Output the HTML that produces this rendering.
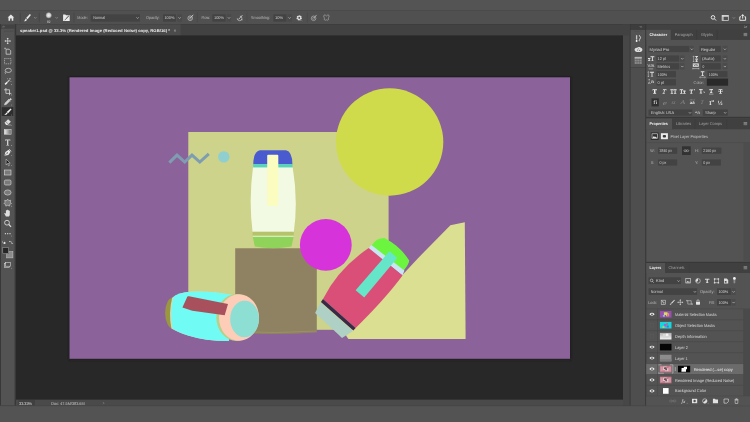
<!DOCTYPE html>
<html>
<head>
<meta charset="utf-8">
<title>Photoshop</title>
<style>
html,body{margin:0;padding:0;}
body{width:750px;height:422px;overflow:hidden;background:#535353;font-family:"Liberation Sans",sans-serif;}
svg{position:absolute;left:0;top:0;display:block;will-change:transform;}
text{text-rendering:geometricPrecision;}

</style>
</head>
<body>
<svg width="750" height="422" viewBox="0 0 750 422">
<rect x="0.00" y="0.00" width="750.00" height="422.00" fill="#535353" />
<rect x="0.00" y="0.00" width="750.00" height="10.70" fill="#545454" />
<rect x="0.00" y="10.40" width="750.00" height="0.70" fill="#454545" />
<rect x="0.00" y="11.00" width="750.00" height="13.00" fill="#505050" />
<rect x="0.00" y="24.00" width="750.00" height="382.00" fill="#383838" />
<rect x="1.00" y="24.00" width="13.60" height="381.60" fill="#535353" />
<rect x="1.00" y="24.40" width="13.60" height="4.30" fill="#424242" />
<rect x="16.00" y="24.40" width="607.00" height="11.10" fill="#424242" />
<rect x="16.30" y="24.40" width="164.30" height="11.10" fill="#4b4b4b" />
<rect x="16.00" y="35.50" width="607.00" height="364.20" fill="#282828" />
<rect x="16.00" y="399.70" width="607.00" height="6.00" fill="#4a4a4a" />
<rect x="0.00" y="405.80" width="750.00" height="16.20" fill="#535353" />
<rect x="0.00" y="405.60" width="750.00" height="0.60" fill="#464646" />
<rect x="623.00" y="24.40" width="6.70" height="381.20" fill="#474747" />
<rect x="623.00" y="24.40" width="6.70" height="11.10" fill="#424242" />
<rect x="630.60" y="24.40" width="14.50" height="5.20" fill="#3d3d3d" />
<rect x="630.60" y="29.80" width="14.60" height="37.20" fill="#535353" />
<path d="M634,31.3 h7.4" stroke="#444" stroke-width="0.45" stroke-dasharray="0.6 0.5"/>
<rect x="630.60" y="67.40" width="14.60" height="338.20" fill="#4e4e4e" />
<rect x="646.30" y="24.40" width="103.70" height="5.30" fill="#424242" />
<defs>
    <filter id="sh" x="-5%" y="-5%" width="110%" height="110%"><feGaussianBlur stdDeviation="0.8"/></filter>
    <clipPath id="cv"><rect x="69.5" y="77.3" width="500.5" height="281.5"/></clipPath>
  </defs>
  <rect x="69" y="77.5" width="502" height="282.3" fill="#1c1c1c" filter="url(#sh)"/>
  <rect x="69.5" y="77.3" width="500.5" height="281.5" fill="#8b629a"/>
  <g clip-path="url(#cv)">
    <!-- olive backdrop -->
    <rect x="188.3" y="132" width="200.3" height="197.8" fill="#cdd38b"/>
    <!-- big yellow circle -->
    <circle cx="389.6" cy="142" r="53.7" fill="#d0db4c"/>
    <!-- zigzag -->
    <polyline points="169.3,162.6 177,155.1 184.7,162 192,155.1 199.8,162 208.8,153.8" fill="none" stroke="#7f9db0" stroke-width="3" stroke-linejoin="miter"/>
    <circle cx="223.8" cy="156.9" r="5.7" fill="#8fcfd0"/>
    <!-- pale triangle -->
    <path d="M346,335.6 L418,258.2 L450.4,225.2 L464.8,222.2 L465.6,339.1 L348.4,339.1 Z" fill="#dbdf92"/>
    <!-- brown box -->
    <path d="M235.2,248.2 H316.8 V332.4 Q276,335.4 235.2,332.8 Z" fill="#8f8262"/><path d="M235.2,331.4 Q276,334 316.8,331" fill="none" stroke="#a29a62" stroke-width="0.6"/>
    <!-- white bottle -->
    <path d="M253.3,164.3 Q253.3,151.5 260,150.2 H286 Q292.3,151.5 292.4,164.3 Z" fill="#4a5bd0"/>
    <rect x="253.2" y="164.2" width="39.3" height="3.5" fill="#52d6c0"/>
    <path d="M253,167.5 H292.7 Q298.3,200 293.8,232 H252.6 Q248.5,200 253,167.5 Z" fill="#f3fae3"/>
    <rect x="252.6" y="231.7" width="41.2" height="4.1" fill="#b5c46a"/>
    <path d="M252.7,236.6 H293.7 L291.5,246.5 Q273,250 254.8,246.5 Z" fill="#8fd35b"/>
    <rect x="252.7" y="235.8" width="41" height="0.9" fill="#e9f5d5"/>
    <rect x="267.2" y="154.8" width="11.1" height="51.2" rx="1" fill="#fafcc0"/>
    <!-- magenta circle -->
    <circle cx="325.8" cy="244.9" r="25.9" fill="#d633da"/>
    <!-- pink bottle -->
    <g>
      <path d="M370.6,246.5 L372.6,244.2 Q377,238 384.3,238.1 Q400,246 409.2,260.5 Q409,264 403.8,270.6 Z" fill="#6cf53f"/>
      <path d="M368.5,248.2 L371.4,244.9 L404.4,270.6 L402.5,275.4 Z" fill="#c9e4f5"/>
      <path d="M368.7,248 L402.5,275.4 Q386,298 355.6,327.9 L323,298.9 Q338.2,268.6 368.7,248 Z" fill="#d94f78"/>
      <path d="M323,298.9 L355.6,327.9 L353.3,330.6 L320.9,302 Z" fill="#3a2a4a"/>
      <path d="M320.6,302.4 L353,331 L342,338 L338.4,334.5 L315.1,313.1 Z" fill="#afd0c4"/>
      <path d="M389.5,251.2 L397.3,257.9 L364.2,297.6 L355.6,290.3 Z" fill="#66e6c8"/>
    </g>
    <!-- cyan bottle -->
    <g>
      <ellipse cx="173" cy="313" rx="7.9" ry="15.5" fill="#9a9740"/>
      <path d="M172.2,297.8 Q178,292.5 190,291.7 Q210,290.5 232,294.8 L229,341 Q205,341 188,335.5 Q176,331.5 171.4,328.4 Q168.3,313 172.2,297.8 Z" fill="#d3dcb4"/>
      <path d="M173.4,297 Q178,292.5 190,291.7 Q210,290.5 232,294.8 L229,341 Q205,341 188,335.5 Q176,331.5 172.6,328.6 Q169.6,313 173.4,297 Z" fill="#70fcf5"/>
      <ellipse cx="236.6" cy="317.5" rx="20.3" ry="23.5" fill="#b8cf8c"/>
      <ellipse cx="239" cy="317.5" rx="20" ry="23.3" fill="#fdcdb8"/>
      <ellipse cx="244.6" cy="319" rx="14.4" ry="18.3" fill="#8ddfd3"/>
      <path d="M187.4,296.6 Q188,296 189,296.3 L228,304.1 L224.7,315.2 L192.3,310.7 L182.4,307.4 Z" fill="#a8505c"/>
    </g>
  </g>

<path d="M7.6,17.6 L10.9,14.6 L14.2,17.6 L13.3,17.6 L13.3,20.7 L11.7,20.7 L11.7,18.6 L10.1,18.6 L10.1,20.7 L8.5,20.7 L8.5,17.6 Z" fill="#e6e6e6"/>
<line x1="20.30" y1="12.70" x2="20.30" y2="22.20" stroke="#404040" stroke-width="0.6"/>
<path d="M29.9,14.1 L30.9,15 L27.5,19.3 L26.1,18.1 Z" fill="#ececec"/><path d="M25.7,18.6 L27,19.8 Q26.2,21.6 23.8,21.3 Q25.1,20.5 25.7,18.6 Z" fill="#ececec"/>
<path d="M34.15,17.20 L35.30,18.40 L36.45,17.20" fill="none" stroke="#9a9a9a" stroke-width="0.65"/>
<line x1="39.30" y1="12.70" x2="39.30" y2="22.20" stroke="#404040" stroke-width="0.6"/>
<defs><radialGradient id="bp"><stop offset="0" stop-color="#f2f2f2"/><stop offset="0.55" stop-color="#cfcfcf"/><stop offset="1" stop-color="#cfcfcf" stop-opacity="0"/></radialGradient></defs>
<circle cx="48.7" cy="15.3" r="3.4" fill="url(#bp)"/>
<text x="47.00" y="22.66" textLength="3.40" lengthAdjust="spacingAndGlyphs" font-size="3.6" fill="#dcdcdc" font-weight="normal" font-style="normal" font-family="Liberation Sans">82</text>
<path d="M55.55,17.20 L56.70,18.40 L57.85,17.20" fill="none" stroke="#9a9a9a" stroke-width="0.65"/>
<path d="M63.1,14.6 H65.4 L66,15.3 H69.7 V20.9 H63.1 Z" fill="#ececec"/><path d="M68.6,15.6 L69.1,16.1 L66.3,19.1 L65.6,18.5 Z M65.3,18.9 L66,19.5 Q65.5,20.4 64.2,20.2 Q65,19.8 65.3,18.9 Z" fill="#4a4a4a"/>
<line x1="74.00" y1="12.70" x2="74.00" y2="22.20" stroke="#404040" stroke-width="0.6"/>
<text x="77.30" y="19.43" textLength="10.40" lengthAdjust="spacingAndGlyphs" font-size="4.1" fill="#bababa" font-weight="normal" font-style="normal" font-family="Liberation Sans">Mode:</text>
<rect x="90.70" y="14.40" width="49.30" height="7.20" fill="#434343" />
<text x="93.30" y="19.43" textLength="11.70" lengthAdjust="spacingAndGlyphs" font-size="4.1" fill="#d2d2d2" font-weight="normal" font-style="normal" font-family="Liberation Sans">Normal</text>
<path d="M136.45,17.30 L137.60,18.50 L138.75,17.30" fill="none" stroke="#c4c4c4" stroke-width="0.65"/>
<text x="146.00" y="19.43" textLength="13.60" lengthAdjust="spacingAndGlyphs" font-size="4.1" fill="#bababa" font-weight="normal" font-style="normal" font-family="Liberation Sans">Opacity:</text>
<rect x="163.00" y="14.40" width="13.00" height="7.20" fill="#434343" />
<text x="164.40" y="19.43" textLength="10.00" lengthAdjust="spacingAndGlyphs" font-size="4.1" fill="#d2d2d2" font-weight="normal" font-style="normal" font-family="Liberation Sans">100%</text>
<rect x="177.40" y="14.40" width="4.40" height="7.20" fill="#4a4a4a" />
<path d="M178.45,17.30 L179.60,18.50 L180.75,17.30" fill="none" stroke="#c4c4c4" stroke-width="0.65"/>
<circle cx="190.2" cy="18.2" r="2.3" fill="none" stroke="#dcdcdc" stroke-width="0.6"/><circle cx="190.2" cy="18.2" r="0.9" fill="none" stroke="#dcdcdc" stroke-width="0.45"/><path d="M190.4,18 L193.2,14.8" stroke="#dcdcdc" stroke-width="0.8"/>
<line x1="197.40" y1="12.70" x2="197.40" y2="22.20" stroke="#454545" stroke-width="0.5"/>
<text x="201.40" y="19.43" textLength="8.60" lengthAdjust="spacingAndGlyphs" font-size="4.1" fill="#bababa" font-weight="normal" font-style="normal" font-family="Liberation Sans">Flow:</text>
<rect x="212.40" y="14.40" width="13.20" height="7.20" fill="#434343" />
<text x="214.00" y="19.43" textLength="10.00" lengthAdjust="spacingAndGlyphs" font-size="4.1" fill="#d2d2d2" font-weight="normal" font-style="normal" font-family="Liberation Sans">100%</text>
<rect x="226.80" y="14.40" width="4.40" height="7.20" fill="#4a4a4a" />
<path d="M227.85,17.30 L229.00,18.50 L230.15,17.30" fill="none" stroke="#c4c4c4" stroke-width="0.65"/>
<path d="M237.3,18.3 a2.3,2.3 0 1 0 2.6,-2.2" fill="none" stroke="#dcdcdc" stroke-width="0.6"/><path d="M238.6,19.3 L242.4,15.2" stroke="#dcdcdc" stroke-width="0.8"/><path d="M241.2,19.8 h1.6" stroke="#dcdcdc" stroke-width="0.5"/>
<line x1="247.00" y1="12.70" x2="247.00" y2="22.20" stroke="#454545" stroke-width="0.5"/>
<text x="251.00" y="19.43" textLength="19.00" lengthAdjust="spacingAndGlyphs" font-size="4.1" fill="#bababa" font-weight="normal" font-style="normal" font-family="Liberation Sans">Smoothing:</text>
<rect x="273.40" y="14.40" width="13.00" height="7.20" fill="#434343" />
<text x="275.00" y="19.43" textLength="8.00" lengthAdjust="spacingAndGlyphs" font-size="4.1" fill="#d2d2d2" font-weight="normal" font-style="normal" font-family="Liberation Sans">10%</text>
<rect x="287.60" y="14.40" width="4.20" height="7.20" fill="#4a4a4a" />
<path d="M288.45,17.30 L289.60,18.50 L290.75,17.30" fill="none" stroke="#c4c4c4" stroke-width="0.65"/>
<circle cx="299.2" cy="17.9" r="1.9" fill="none" stroke="#e4e4e4" stroke-width="1.5" stroke-dasharray="1 0.5"/><circle cx="299.2" cy="17.9" r="1.5" fill="none" stroke="#e4e4e4" stroke-width="0.9"/><path d="M301.3,20 l1,0.9" stroke="#d0d0d0" stroke-width="0.4"/>
<line x1="307.40" y1="12.70" x2="307.40" y2="22.20" stroke="#454545" stroke-width="0.5"/>
<circle cx="313.6" cy="18.3" r="2.3" fill="none" stroke="#bdbdbd" stroke-width="0.6"/><circle cx="313.6" cy="18.3" r="1" fill="none" stroke="#bdbdbd" stroke-width="0.45"/><path d="M313.8,18.1 L316.6,14.9" stroke="#bdbdbd" stroke-width="0.8"/>
<path d="M326.4,16 C325.4,14.6 323.6,14.6 323.7,16.2 C323.8,17.4 324.6,17.8 324.4,18.6 C324,19.8 324.8,20.8 326.4,19.8 C328,20.8 328.8,19.8 328.4,18.6 C328.2,17.8 329,17.4 329.1,16.2 C329.2,14.6 327.4,14.6 326.4,16 Z" fill="none" stroke="#bdbdbd" stroke-width="0.55"/>
<circle cx="713" cy="17.4" r="1.8" fill="none" stroke="#e4e4e4" stroke-width="1"/><path d="M714.4,18.8 L716.1,20.5" stroke="#e4e4e4" stroke-width="1"/>
<rect x="722.1" y="15.4" width="6.2" height="5" fill="none" stroke="#e0e0e0" stroke-width="0.7"/><rect x="722.1" y="15.4" width="6.2" height="1.3" fill="#e0e0e0"/><rect x="722.1" y="15.4" width="1.8" height="5" fill="#e0e0e0" opacity="0.55"/>
<path d="M732.75,17.30 L733.90,18.50 L735.05,17.30" fill="none" stroke="#9a9a9a" stroke-width="0.65"/>
<path d="M741,16.8 H739.8 V20.3 H745.6 V16.8 H744.4" fill="none" stroke="#e4e4e4" stroke-width="1"/><path d="M742.7,18.6 V15.4" fill="none" stroke="#e4e4e4" stroke-width="1"/><path d="M741.1,16 L742.7,14.1 L744.3,16 Z" fill="#e4e4e4"/>
<text x="20.00" y="32.04" textLength="150.00" lengthAdjust="spacingAndGlyphs" font-size="4.1" fill="#ececec" font-weight="bold" font-style="normal" font-family="Liberation Sans">speaker1.psd @ 33.3% (Rendered Image (Reduced Noise) copy, RGB/16) *</text>
<path d="M174.2,29.8 l1.6,1.6 m0,-1.6 l-1.6,1.6" stroke="#d0d0d0" stroke-width="0.5"/>
<path d="M4,31.2 h9.4" stroke="#3c3c3c" stroke-width="0.5" stroke-dasharray="0.6 0.5"/>
<path d="M2.5,26 l0.7,0.7 l-0.7,0.7 M3.7,26 l0.7,0.7 l-0.7,0.7" fill="none" stroke="#bbb" stroke-width="0.4"/>
<path d="M640.6,26.1 l-0.7,0.7 l0.7,0.7 M641.8,26.1 l-0.7,0.7 l0.7,0.7" fill="none" stroke="#bbb" stroke-width="0.4"/>
<path d="M744.4,26 l0.9,0.9 l-0.9,0.9 M745.8,26 l0.9,0.9 l-0.9,0.9" fill="none" stroke="#d8d8d8" stroke-width="0.5"/>
<rect x="18.40" y="400.20" width="16.60" height="5.20" fill="#404040" />
<text x="19.00" y="404.94" textLength="13.00" lengthAdjust="spacingAndGlyphs" font-size="4.1" fill="#e0e0e0" font-weight="normal" font-style="normal" font-family="Liberation Sans">33.33%</text>
<text x="51.30" y="404.94" textLength="33.40" lengthAdjust="spacingAndGlyphs" font-size="4.1" fill="#c8c8c8" font-weight="normal" font-style="normal" font-family="Liberation Sans">Doc: 47.5M/383.6M</text>
<path d="M103,402.2 l1,1 l-1,1" fill="none" stroke="#a8a8a8" stroke-width="0.45"/>
<g transform="translate(7.70,41.00)"><path d="M0,-2.6 V2.6 M-2.6,0 H2.6" stroke="#dedede" stroke-width="0.7"/><path d="M0,-3.3 l1.1,1.3 h-2.2 Z M0,3.3 l1.1,-1.3 h-2.2 Z M-3.3,0 l1.3,1.1 v-2.2 Z M3.3,0 l-1.3,1.1 v-2.2 Z" fill="#dedede"/></g>
<g transform="translate(7.70,51.20)"><path d="M-1.6,-2 H1.4 L3,-0.4 V3 H-1.6 Z" fill="none" stroke="#dedede" stroke-width="0.7"/><path d="M-3.4,-2.8 h1.6 M-2.6,-3.6 v1.6" stroke="#dedede" stroke-width="0.5"/></g>
<g transform="translate(7.70,61.20)"><rect x="-3.2" y="-2.6" width="6.4" height="5.2" fill="none" stroke="#dedede" stroke-width="0.6" stroke-dasharray="1.1 0.8"/></g>
<g transform="translate(7.70,71.00)"><ellipse cx="0.6" cy="-0.6" rx="3.1" ry="2.1" fill="none" stroke="#dedede" stroke-width="0.65"/><path d="M-1.9,0.5 q-1.1,0.8 -0.5,1.5 q0.5,0.5 -0.3,1.1" fill="none" stroke="#dedede" stroke-width="0.6"/></g>
<g transform="translate(7.70,81.60)"><path d="M-2.6,2.8 L-0.4,0.6" stroke="#f0f0f0" stroke-width="1.5"/><path d="M-0.6,0.8 L1.8,-1.6" stroke="#c8c8c8" stroke-width="1.1"/><path d="M2.3,-3.6 v1.6 M1.5,-2.8 h1.6 M3.2,-0.6 v1 M-0.2,-3.3 v1" stroke="#dedede" stroke-width="0.45"/><path d="M3.3,3.4 l0.9,0 l0,-0.9 Z" fill="#dedede"/></g>
<g transform="translate(7.70,91.60)"><path d="M-1.8,-3.6 V1.8 H3.6 M-3.6,-1.8 H1.8 V3.6" fill="none" stroke="#dedede" stroke-width="0.75"/><path d="M3.3,3.6 l0.9,0 l0,-0.9 Z" fill="#dedede"/></g>
<g transform="translate(7.70,101.70)"><path d="M-3.3,3.3 L-2.7,1.3 L0.5,-1.9 L1.9,-0.5 L-1.3,2.7 Z" fill="#cfcfcf" stroke="#dedede" stroke-width="0.4"/><path d="M0.4,-2.6 L2.6,-0.4 M1.3,-1.4 L2.4,-2.8 Q3.2,-3.6 3.6,-2.6 Q3.6,-2 2.9,-1.4" fill="#dedede" stroke="#dedede" stroke-width="0.7"/><path d="M3.3,3.6 l0.9,0 l0,-0.9 Z" fill="#dedede"/></g>
<rect x="1.70" y="107.20" width="11.60" height="8.80" fill="#2e2e2e" />
<g transform="translate(7.70,111.70)"><path d="M2.9,-3.3 L3.9,-2.4 L0.4,1.5 L-1,0.3 Z" fill="#f6f6f6"/><path d="M-1.4,0.7 L0,1.9 Q-0.8,3.6 -3.5,3.3 Q-2,2.5 -1.4,0.7 Z" fill="#f6f6f6"/><path d="M3.3,3.6 l0.9,0 l0,-0.9 Z" fill="#dedede"/></g>
<g transform="translate(7.70,122.00)"><path d="M-3.2,0.8 L0.4,-2.8 L3.2,-0.2 L-0.2,3 H-1.6 Z" fill="#dedede"/><path d="M-2,-0.4 L0.8,2.2" stroke="#535353" stroke-width="0.5"/><path d="M-0.2,3 H3.2" stroke="#dedede" stroke-width="0.5"/><path d="M3.3,3.6 l0.9,0 l0,-0.9 Z" fill="#dedede"/></g>
<defs><linearGradient id="gr"><stop offset="0" stop-color="#eee"/><stop offset="1" stop-color="#666"/></linearGradient></defs>
<g transform="translate(7.70,131.90)"><rect x="-3.4" y="-2.3" width="6.8" height="4.6" fill="url(#gr)" stroke="#dedede" stroke-width="0.55"/></g>
<g transform="translate(7.70,142.40)"><path d="M-2.6,-3 H2.6 V-1.6 H2 V-2.2 H0.6 V2.6 H1.4 V3.2 H-1.4 V2.6 H-0.6 V-2.2 H-2 V-1.6 H-2.6 Z" fill="#dedede"/><path d="M3.3,3.6 l0.9,0 l0,-0.9 Z" fill="#dedede"/></g>
<g transform="translate(7.70,152.50)"><path d="M-3.3,3.3 L-2.3,-0.5 L1,-2.7 L2.9,-0.8 L0.7,2.5 Z" fill="#e8e8e8"/><path d="M-3.2,3.2 L-0.6,0.6" stroke="#535353" stroke-width="0.5"/><circle cx="-0.3" cy="0.3" r="0.65" fill="#535353"/><path d="M1.4,-3.4 L3.6,-1.2" stroke="#dedede" stroke-width="0.8"/><path d="M3.3,3.6 l0.9,0 l0,-0.9 Z" fill="#dedede"/></g>
<g transform="translate(7.70,162.50)"><path d="M-1.6,-3.4 L-1.6,2.4 L-0.2,1 L0.8,3.3 L1.7,2.9 L0.7,0.7 L2.5,0.6 Z" fill="#1c1c1c" stroke="#d8d8d8" stroke-width="0.55" stroke-linejoin="round"/><path d="M3.3,3.6 l0.9,0 l0,-0.9 Z" fill="#dedede"/></g>
<g transform="translate(7.70,172.50)"><rect x="-3.3" y="-2.5" width="6.6" height="5" fill="#7a7a7a" stroke="#dedede" stroke-width="0.6"/></g>
<g transform="translate(7.70,182.50)"><rect x="-3.3" y="-2.5" width="6.6" height="5" rx="1.3" fill="#7a7a7a" stroke="#dedede" stroke-width="0.6"/></g>
<g transform="translate(7.70,192.50)"><ellipse cx="0" cy="0" rx="3.4" ry="2.6" fill="#7a7a7a" stroke="#dedede" stroke-width="0.6"/></g>
<g transform="translate(7.70,202.50)"><path d="M0,-3.4 L1.1,-1.9 L3,-2.2 L2.6,-0.3 L3.8,1 L2.1,1.8 L1.9,3.6 L0,2.8 L-1.9,3.6 L-2.1,1.8 L-3.8,1 L-2.6,-0.3 L-3,-2.2 L-1.1,-1.9 Z" fill="#7a7a7a" stroke="#dedede" stroke-width="0.55"/><path d="M3.3,3.9 l0.9,0 l0,-0.9 Z" fill="#dedede"/></g>
<g transform="translate(7.70,213.00)"><path d="M-1.8,3.4 L-3.4,0.6 Q-3.6,-0.2 -2.6,0 L-1.8,0.8 V-2.4 Q-1.3,-3.1 -0.9,-2.4 V-3.1 Q-0.4,-3.8 0.1,-3.1 V-2.8 Q0.6,-3.4 1.1,-2.8 V-2.1 Q1.7,-2.7 2.1,-2 V1.4 Q2.1,2.6 1.3,3.4 Z" fill="#dedede"/></g>
<g transform="translate(7.70,223.40)"><circle cx="-0.7" cy="-0.7" r="2.4" fill="none" stroke="#dedede" stroke-width="0.85"/><path d="M1.1,1.1 L3.4,3.4" stroke="#dedede" stroke-width="1.1"/></g>
<g transform="translate(7.70,233.70)"><circle cx="-2.3" cy="0" r="0.65" fill="#dedede"/><circle cx="0" cy="0" r="0.65" fill="#dedede"/><circle cx="2.3" cy="0" r="0.65" fill="#dedede"/><path d="M3.3,2.6 l0.9,0 l0,-0.9 Z" fill="#dedede"/></g>
<g transform="translate(3.90,242.40)"><rect x="-1.3" y="-1.3" width="1.8" height="1.8" fill="#111" stroke="#dedede" stroke-width="0.3"/><rect x="-0.3" y="-0.3" width="1.8" height="1.8" fill="#eee"/></g>
<g transform="translate(10.90,242.30)"><path d="M-1.4,-0.8 Q0.8,-1.4 1.2,1.2" fill="none" stroke="#dedede" stroke-width="0.5"/><path d="M-1.9,-0.7 l1.1,-0.9 v1.6 Z M1.2,1.8 l-0.9,-1 h1.7 Z" fill="#dedede"/></g>
<rect x="6.7" y="251.6" width="6.2" height="6.3" fill="#8c8c8c" stroke="#c8c8c8" stroke-width="0.5"/><rect x="2.8" y="247.5" width="5.8" height="6.1" fill="#262626" stroke="#a8a8a8" stroke-width="0.5"/>
<g transform="translate(7.70,265.20)"><rect x="-3.4" y="-1.6" width="5" height="3.8" fill="none" stroke="#dedede" stroke-width="0.55"/><rect x="-2" y="-2.8" width="5" height="3.8" fill="#535353" stroke="#dedede" stroke-width="0.55"/><path d="M3.3,3.4 l0.9,0 l0,-0.9 Z" fill="#dedede"/></g>
<g transform="translate(638.30,38.40)"><path d="M-1.7,-3.2 v4.4" stroke="#c8c8c8" stroke-width="1.3"/><path d="M-1.7,1.6 v1.9" stroke="#f4f4f4" stroke-width="1.5"/><path d="M0.9,-3.2 Q3.4,-0.8 1.4,1 Q0.6,1.9 1.2,2.8" fill="none" stroke="#dedede" stroke-width="0.95"/></g>
<g transform="translate(638.50,49.50)"><ellipse cx="0" cy="0.2" rx="3.9" ry="2.3" fill="#dedede"/><ellipse cx="0.6" cy="-1.4" rx="1.6" ry="1" fill="#dedede"/><circle cx="-0.9" cy="0.5" r="0.5" fill="#535353"/><circle cx="0.9" cy="0.7" r="0.5" fill="#535353"/><circle cx="0.2" cy="-0.7" r="0.45" fill="#535353"/></g>
<g transform="translate(638.20,60.40)"><rect x="-3.5" y="-3.5" width="7" height="7" fill="#8e8e8e"/><path d="M-3.5,-0.9 H3.5 M-3.5,1.3 H3.5 M-1.2,-2 V3.5 M1.2,-2 V3.5" stroke="#535353" stroke-width="0.45"/><rect x="-3.5" y="-3.5" width="7" height="1.5" fill="#b4b4b4"/></g>
<rect x="646.30" y="29.80" width="103.70" height="87.00" fill="#535353" />
<rect x="646.30" y="29.80" width="103.70" height="10.10" fill="#404040" />
<rect x="646.30" y="29.80" width="24.50" height="10.30" fill="#535353" />
<text x="649.50" y="35.95" textLength="17.70" lengthAdjust="spacingAndGlyphs" font-size="4.0" fill="#f2f2f2" font-weight="bold" font-style="normal" font-family="Liberation Sans">Character</text>
<text x="674.80" y="35.99" textLength="17.80" lengthAdjust="spacingAndGlyphs" font-size="4.1" fill="#a6a6a6" font-weight="normal" font-style="normal" font-family="Liberation Sans">Paragraph</text>
<text x="700.90" y="35.99" textLength="12.10" lengthAdjust="spacingAndGlyphs" font-size="4.1" fill="#a6a6a6" font-weight="normal" font-style="normal" font-family="Liberation Sans">Glyphs</text>
<path d="M743.6,33.45 h3.6 M743.6,34.55 h3.6 M743.6,35.65 h3.6" stroke="#b4b4b4" stroke-width="0.55"/>
<line x1="696.60" y1="30.20" x2="696.60" y2="39.60" stroke="#363636" stroke-width="0.4"/>
<line x1="717.20" y1="30.20" x2="717.20" y2="39.60" stroke="#363636" stroke-width="0.4"/>
<rect x="648.50" y="45.90" width="40.80" height="6.20" fill="#434343" />
<text x="649.60" y="50.54" textLength="19.80" lengthAdjust="spacingAndGlyphs" font-size="4.1" fill="#d2d2d2" font-weight="normal" font-style="normal" font-family="Liberation Sans">Myriad Pro</text>
<rect x="689.90" y="45.90" width="3.90" height="6.20" fill="#4b4b4b" />
<path d="M690.65,48.60 L691.80,49.80 L692.95,48.60" fill="none" stroke="#c4c4c4" stroke-width="0.65"/>
<rect x="699.50" y="45.90" width="21.30" height="6.20" fill="#434343" />
<text x="700.90" y="50.54" textLength="14.30" lengthAdjust="spacingAndGlyphs" font-size="4.1" fill="#d2d2d2" font-weight="normal" font-style="normal" font-family="Liberation Sans">Regular</text>
<rect x="722.60" y="45.90" width="4.80" height="6.20" fill="#4b4b4b" />
<path d="M723.75,48.60 L724.90,49.80 L726.05,48.60" fill="none" stroke="#c4c4c4" stroke-width="0.65"/>
<path d="M648.00,57.90 h2.4 v1 h-0.75 v1.40 h0.7 v0.6 h-2.3 v-0.6 h0.7 v-1.40 h-0.75 Z" fill="#e2e2e2"/>
<path d="M650.50,56.20 h3.8 v1 h-1.45 v3.20 h0.7 v0.6 h-2.3 v-0.6 h0.7 v-3.20 h-1.45 Z" fill="#e2e2e2"/>
<rect x="656.40" y="55.40" width="22.60" height="6.20" fill="#434343" />
<text x="657.60" y="60.04" textLength="8.50" lengthAdjust="spacingAndGlyphs" font-size="4.1" fill="#d2d2d2" font-weight="normal" font-style="normal" font-family="Liberation Sans">12 pt</text>
<rect x="679.60" y="55.40" width="5.00" height="6.20" fill="#4b4b4b" />
<path d="M681.15,58.10 L682.30,59.30 L683.45,58.10" fill="none" stroke="#c4c4c4" stroke-width="0.65"/>
<path d="M695.30,55.90 h2.6 v1 h-0.85 v1.00 h0.7 v0.6 h-2.3 v-0.6 h0.7 v-1.00 h-0.85 Z" fill="#e2e2e2"/>
<path d="M695.30,59.30 h2.6 v1 h-0.85 v1.00 h0.7 v0.6 h-2.3 v-0.6 h0.7 v-1.00 h-0.85 Z" fill="#e2e2e2"/>
<path d="M693.6,56 v5.8 M692.9,56.8 l0.7,-0.9 l0.7,0.9 M692.9,61 l0.7,0.9 l0.7,-0.9" fill="none" stroke="#e2e2e2" stroke-width="0.4"/>
<rect x="700.90" y="55.40" width="19.90" height="6.20" fill="#434343" />
<text x="702.00" y="60.04" textLength="12.60" lengthAdjust="spacingAndGlyphs" font-size="4.1" fill="#d2d2d2" font-weight="normal" font-style="normal" font-family="Liberation Sans">(Auto)</text>
<rect x="722.60" y="55.40" width="4.80" height="6.20" fill="#4b4b4b" />
<path d="M723.75,58.10 L724.90,59.30 L726.05,58.10" fill="none" stroke="#c4c4c4" stroke-width="0.65"/>
<text x="647.60" y="67.27" textLength="6.80" lengthAdjust="spacingAndGlyphs" font-size="4.2" fill="#e2e2e2" font-weight="normal" font-style="normal" font-family="Liberation Sans">V/A</text>
<path d="M648.6,68.9 h4.6" stroke="#e2e2e2" stroke-width="0.5"/>
<rect x="656.40" y="63.20" width="22.60" height="6.20" fill="#434343" />
<text x="657.60" y="67.84" textLength="12.50" lengthAdjust="spacingAndGlyphs" font-size="4.1" fill="#d2d2d2" font-weight="normal" font-style="normal" font-family="Liberation Sans">Metrics</text>
<rect x="679.60" y="63.20" width="5.00" height="6.20" fill="#4b4b4b" />
<path d="M681.15,65.90 L682.30,67.10 L683.45,65.90" fill="none" stroke="#c4c4c4" stroke-width="0.65"/>
<rect x="692.8" y="63.4" width="6" height="3.4" fill="#e2e2e2"/><path d="M692.8,68.6 h6 M692.8,67.8 v1.6 M698.8,67.8 v1.6" stroke="#e2e2e2" stroke-width="0.5"/>
<text x="693.50" y="66.25" textLength="4.60" lengthAdjust="spacingAndGlyphs" font-size="3" fill="#535353" font-weight="bold" font-style="normal" font-family="Liberation Sans">VA</text>
<rect x="700.90" y="63.20" width="19.90" height="6.20" fill="#434343" />
<text x="702.40" y="67.84" textLength="1.80" lengthAdjust="spacingAndGlyphs" font-size="4.1" fill="#d2d2d2" font-weight="normal" font-style="normal" font-family="Liberation Sans">0</text>
<rect x="722.60" y="63.20" width="4.80" height="6.20" fill="#4b4b4b" />
<path d="M723.75,65.90 L724.90,67.10 L726.05,65.90" fill="none" stroke="#c4c4c4" stroke-width="0.65"/>
<path d="M650.00,71.80 h4 v1 h-1.55 v3.20 h0.7 v0.6 h-2.3 v-0.6 h0.7 v-3.20 h-1.55 Z" fill="#e2e2e2"/>
<path d="M648.4,71.6 v5.2 M647.7,72.5 l0.7,-0.9 l0.7,0.9 M647.7,75.9 l0.7,0.9 l0.7,-0.9" fill="none" stroke="#e2e2e2" stroke-width="0.4"/>
<rect x="656.40" y="71.10" width="19.60" height="6.20" fill="#434343" />
<text x="657.60" y="75.73" textLength="9.60" lengthAdjust="spacingAndGlyphs" font-size="4.1" fill="#d2d2d2" font-weight="normal" font-style="normal" font-family="Liberation Sans">100%</text>
<path d="M700.80,71.30 h3.6 v1 h-1.35 v3.00 h0.7 v0.6 h-2.3 v-0.6 h0.7 v-3.00 h-1.35 Z" fill="#e2e2e2"/>
<path d="M699.6,77.3 h5.8 M700.5,76.6 l-0.9,0.7 l0.9,0.7 M704.5,76.6 l0.9,0.7 l-0.9,0.7" fill="none" stroke="#e2e2e2" stroke-width="0.4"/>
<rect x="707.50" y="71.10" width="19.90" height="6.20" fill="#434343" />
<text x="708.70" y="75.73" textLength="9.40" lengthAdjust="spacingAndGlyphs" font-size="4.1" fill="#d2d2d2" font-weight="normal" font-style="normal" font-family="Liberation Sans">100%</text>
<text x="648.00" y="84.09" textLength="2.60" lengthAdjust="spacingAndGlyphs" font-size="3.4" fill="#e2e2e2" font-weight="normal" font-style="normal" font-family="Liberation Sans">A</text>
<text x="650.80" y="83.31" textLength="3.20" lengthAdjust="spacingAndGlyphs" font-size="4.6" fill="#e2e2e2" font-weight="normal" font-style="normal" font-family="Liberation Sans">a</text>
<path d="M649.2,79.2 v1.6 M648.6,79.9 l0.6,-0.8 l0.6,0.8" fill="none" stroke="#e2e2e2" stroke-width="0.4"/>
<rect x="656.40" y="79.20" width="19.60" height="6.20" fill="#434343" />
<text x="657.60" y="83.84" textLength="6.60" lengthAdjust="spacingAndGlyphs" font-size="4.1" fill="#d2d2d2" font-weight="normal" font-style="normal" font-family="Liberation Sans">0 pt</text>
<text x="693.60" y="83.84" textLength="10.30" lengthAdjust="spacingAndGlyphs" font-size="4.1" fill="#bababa" font-weight="normal" font-style="normal" font-family="Liberation Sans">Color:</text>
<rect x="706.80" y="78.60" width="21.30" height="7.10" fill="#2a2a2a" />
<path transform="translate(654.70,91.50) skewX(0)" d="M-2.20,-2.30 h4.40 v1.2 h-0.5 v-0.5 h-0.95 v3.20 h0.7 v0.6 h-2.90 v-0.6 h0.7 v-3.20 h-0.95 v0.5 h-0.5 Z" fill="#f0f0f0"/>
<path transform="translate(664.20,91.50) skewX(-16)" d="M-1.80,-2.30 h3.60 v1.2 h-0.5 v-0.5 h-0.90 v3.20 h0.7 v0.6 h-2.20 v-0.6 h0.7 v-3.20 h-0.90 v0.5 h-0.5 Z" fill="#e0e0e0"/>
<path transform="translate(671.90,91.50) skewX(0)" d="M-1.55,-2.30 h3.10 v1.2 h-0.5 v-0.5 h-0.55 v3.20 h0.7 v0.6 h-2.40 v-0.6 h0.7 v-3.20 h-0.55 v0.5 h-0.5 Z" fill="#e8e8e8"/>
<path transform="translate(675.10,91.50) skewX(0)" d="M-1.55,-2.30 h3.10 v1.2 h-0.5 v-0.5 h-0.55 v3.20 h0.7 v0.6 h-2.40 v-0.6 h0.7 v-3.20 h-0.55 v0.5 h-0.5 Z" fill="#e8e8e8"/>
<path transform="translate(681.40,91.50) skewX(0)" d="M-1.70,-2.30 h3.40 v1.2 h-0.5 v-0.5 h-0.70 v3.20 h0.7 v0.6 h-2.40 v-0.6 h0.7 v-3.20 h-0.70 v0.5 h-0.5 Z" fill="#e8e8e8"/>
<path transform="translate(684.40,92.20) skewX(0)" d="M-1.20,-1.60 h2.40 v1.2 h-0.5 v-0.5 h-0.20 v1.80 h0.7 v0.6 h-2.40 v-0.6 h0.7 v-1.80 h-0.20 v0.5 h-0.5 Z" fill="#e8e8e8"/>
<path transform="translate(691.30,91.70) skewX(0)" d="M-1.70,-2.20 h3.40 v1.2 h-0.5 v-0.5 h-0.70 v3.00 h0.7 v0.6 h-2.40 v-0.6 h0.7 v-3.00 h-0.70 v0.5 h-0.5 Z" fill="#e8e8e8"/>
<path transform="translate(694.10,90.30) skewX(0)" d="M-0.90,-1.10 h1.80 v1.2 h-0.5 v-0.5 h--0.10 v0.80 h0.7 v0.6 h-2.40 v-0.6 h0.7 v-0.80 h--0.10 v0.5 h-0.5 Z" fill="#e8e8e8"/>
<path transform="translate(700.90,91.30) skewX(0)" d="M-1.70,-2.20 h3.40 v1.2 h-0.5 v-0.5 h-0.70 v3.00 h0.7 v0.6 h-2.40 v-0.6 h0.7 v-3.00 h-0.70 v0.5 h-0.5 Z" fill="#e8e8e8"/>
<path transform="translate(703.70,92.90) skewX(0)" d="M-0.90,-1.10 h1.80 v1.2 h-0.5 v-0.5 h--0.10 v0.80 h0.7 v0.6 h-2.40 v-0.6 h0.7 v-0.80 h--0.10 v0.5 h-0.5 Z" fill="#e8e8e8"/>
<path transform="translate(711.20,91.00) skewX(0)" d="M-1.80,-2.00 h3.60 v1.2 h-0.5 v-0.5 h-0.80 v2.60 h0.7 v0.6 h-2.40 v-0.6 h0.7 v-2.60 h-0.80 v0.5 h-0.5 Z" fill="#e8e8e8"/>
<line x1="709.00" y1="94.10" x2="713.40" y2="94.10" stroke="#e8e8e8" stroke-width="0.5"/>
<path transform="translate(720.50,91.50) skewX(0)" d="M-1.90,-2.30 h3.80 v1.2 h-0.5 v-0.5 h-0.90 v3.20 h0.7 v0.6 h-2.40 v-0.6 h0.7 v-3.20 h-0.90 v0.5 h-0.5 Z" fill="#e8e8e8"/>
<line x1="718.10" y1="91.50" x2="722.90" y2="91.50" stroke="#e8e8e8" stroke-width="0.5"/>
<rect x="651.50" y="98.40" width="7.30" height="8.00" fill="#303030" />
<text x="653.30" y="104.36" textLength="3.90" lengthAdjust="spacingAndGlyphs" font-size="5.6" fill="#f4f4f4" font-weight="normal" font-style="normal" font-family="Liberation Serif">fi</text>
<text x="662.80" y="104.97" textLength="4.20" lengthAdjust="spacingAndGlyphs" font-size="6.2" fill="#8a8a8a" font-weight="normal" font-style="italic" font-family="Liberation Serif">e</text>
<text x="671.60" y="104.22" textLength="4.00" lengthAdjust="spacingAndGlyphs" font-size="5.2" fill="#8a8a8a" font-weight="normal" font-style="italic" font-family="Liberation Serif">st</text>
<text x="680.60" y="104.43" textLength="4.60" lengthAdjust="spacingAndGlyphs" font-size="5.8" fill="#8a8a8a" font-weight="normal" font-style="italic" font-family="Liberation Serif">A</text>
<text x="689.80" y="104.31" textLength="4.80" lengthAdjust="spacingAndGlyphs" font-size="4.6" fill="#e6e6e6" font-weight="bold" font-style="normal" font-family="Liberation Serif">aā</text>
<path d="M689.8,99.9 h4.8" stroke="#e6e6e6" stroke-width="0.4" stroke-dasharray="0.8 0.6"/>
<text x="700.40" y="104.29" textLength="3.00" lengthAdjust="spacingAndGlyphs" font-size="5.4" fill="#8a8a8a" font-weight="normal" font-style="italic" font-family="Liberation Serif">T</text>
<text x="711.4" y="102.10000000000001" font-size="3.6" font-weight="bold" fill="#ececec" font-family="Liberation Serif">st</text>
<text x="717.8" y="104.5" font-size="6.4" font-weight="bold" fill="#ececec" font-family="Liberation Serif">½</text>
<text x="708.8" y="104.5" font-size="6" font-weight="bold" fill="#ececec" font-family="Liberation Serif">1</text>
<rect x="648.50" y="109.50" width="43.70" height="6.20" fill="#434343" />
<text x="651.00" y="114.14" textLength="23.10" lengthAdjust="spacingAndGlyphs" font-size="4.1" fill="#d2d2d2" font-weight="normal" font-style="normal" font-family="Liberation Sans">English: USA</text>
<path d="M688.85,112.20 L690.00,113.40 L691.15,112.20" fill="none" stroke="#c4c4c4" stroke-width="0.65"/>
<text x="697.2" y="114.2" font-size="4.6" fill="#d8d8d8" font-family="Liberation Sans">a</text>
<text x="695" y="113" font-size="3.4" fill="#d8d8d8" font-family="Liberation Sans">a</text>
<rect x="702.80" y="109.50" width="25.00" height="6.20" fill="#434343" />
<text x="705.30" y="114.14" textLength="10.30" lengthAdjust="spacingAndGlyphs" font-size="4.1" fill="#d2d2d2" font-weight="normal" font-style="normal" font-family="Liberation Sans">Sharp</text>
<path d="M724.05,112.20 L725.20,113.40 L726.35,112.20" fill="none" stroke="#c4c4c4" stroke-width="0.65"/>
<rect x="646.30" y="118.50" width="103.70" height="143.30" fill="#535353" />
<rect x="646.30" y="118.50" width="103.70" height="10.80" fill="#404040" />
<rect x="646.30" y="118.50" width="25.70" height="11.00" fill="#535353" />
<text x="649.50" y="125.00" textLength="18.40" lengthAdjust="spacingAndGlyphs" font-size="4.0" fill="#f2f2f2" font-weight="bold" font-style="normal" font-family="Liberation Sans">Properties</text>
<text x="676.00" y="125.04" textLength="15.10" lengthAdjust="spacingAndGlyphs" font-size="4.1" fill="#a6a6a6" font-weight="normal" font-style="normal" font-family="Liberation Sans">Libraries</text>
<text x="699.00" y="125.04" textLength="23.00" lengthAdjust="spacingAndGlyphs" font-size="4.1" fill="#a6a6a6" font-weight="normal" font-style="normal" font-family="Liberation Sans">Layer Comps</text>
<path d="M743.6,122.50 h3.6 M743.6,123.60 h3.6 M743.6,124.70 h3.6" stroke="#b4b4b4" stroke-width="0.55"/>
<line x1="695.00" y1="119.20" x2="695.00" y2="129.00" stroke="#3a3a3a" stroke-width="0.4"/>
<line x1="726.60" y1="119.20" x2="726.60" y2="129.00" stroke="#3a3a3a" stroke-width="0.4"/>
<line x1="646.30" y1="142.60" x2="750.00" y2="142.60" stroke="#484848" stroke-width="0.5"/>
<rect x="743.40" y="142.80" width="6.60" height="119.00" fill="#4d4d4d" />
<rect x="650.80" y="132.40" width="7.80" height="7.60" fill="#2e2e2e" />
<rect x="652" y="133.8" width="5.4" height="4.6" fill="none" stroke="#e6e6e6" stroke-width="0.6"/><path d="M652.4,138 l1.5,-2 l1.1,1.2 l0.7,-0.7 l1.2,1.5 Z" fill="#e6e6e6"/>
<rect x="660.9" y="133.2" width="7" height="6" fill="#ececec"/><rect x="662.8" y="134.9" width="3.2" height="2.6" rx="0.8" fill="#3a3a3a"/>
<text x="670.50" y="137.74" textLength="37.30" lengthAdjust="spacingAndGlyphs" font-size="4.1" fill="#c8c8c8" font-weight="normal" font-style="normal" font-family="Liberation Sans">Pixel Layer Properties</text>
<text x="650.30" y="152.24" textLength="4.40" lengthAdjust="spacingAndGlyphs" font-size="4.1" fill="#bababa" font-weight="normal" font-style="normal" font-family="Liberation Sans">W:</text>
<rect x="658.10" y="147.60" width="19.10" height="6.20" fill="#434343" />
<text x="659.50" y="152.24" textLength="12.50" lengthAdjust="spacingAndGlyphs" font-size="4.1" fill="#d2d2d2" font-weight="normal" font-style="normal" font-family="Liberation Sans">3840 px</text>
<rect x="682.00" y="146.30" width="8.70" height="8.70" fill="#323232" />
<ellipse cx="685.2" cy="150.7" rx="1.3" ry="0.9" fill="none" stroke="#c4c4c4" stroke-width="0.5"/><ellipse cx="687.5" cy="150.7" rx="1.3" ry="0.9" fill="none" stroke="#c4c4c4" stroke-width="0.5"/>
<text x="694.90" y="152.24" textLength="4.00" lengthAdjust="spacingAndGlyphs" font-size="4.1" fill="#bababa" font-weight="normal" font-style="normal" font-family="Liberation Sans">H:</text>
<rect x="701.80" y="147.60" width="19.60" height="6.20" fill="#434343" />
<text x="703.20" y="152.24" textLength="13.00" lengthAdjust="spacingAndGlyphs" font-size="4.1" fill="#d2d2d2" font-weight="normal" font-style="normal" font-family="Liberation Sans">2160 px</text>
<text x="650.80" y="164.03" textLength="3.50" lengthAdjust="spacingAndGlyphs" font-size="4.1" fill="#bababa" font-weight="normal" font-style="normal" font-family="Liberation Sans">X:</text>
<rect x="658.10" y="159.40" width="19.10" height="6.20" fill="#434343" />
<text x="659.50" y="164.03" textLength="6.90" lengthAdjust="spacingAndGlyphs" font-size="4.1" fill="#d2d2d2" font-weight="normal" font-style="normal" font-family="Liberation Sans">0 px</text>
<text x="694.90" y="164.03" textLength="3.50" lengthAdjust="spacingAndGlyphs" font-size="4.1" fill="#bababa" font-weight="normal" font-style="normal" font-family="Liberation Sans">Y:</text>
<rect x="701.80" y="159.40" width="19.10" height="6.20" fill="#434343" />
<text x="703.20" y="164.03" textLength="6.90" lengthAdjust="spacingAndGlyphs" font-size="4.1" fill="#d2d2d2" font-weight="normal" font-style="normal" font-family="Liberation Sans">0 px</text>
<rect x="646.30" y="263.00" width="103.70" height="142.60" fill="#535353" />
<rect x="646.30" y="263.00" width="103.70" height="10.00" fill="#404040" />
<rect x="646.30" y="263.00" width="18.70" height="10.20" fill="#535353" />
<text x="649.50" y="269.10" textLength="11.70" lengthAdjust="spacingAndGlyphs" font-size="4.0" fill="#f2f2f2" font-weight="bold" font-style="normal" font-family="Liberation Sans">Layers</text>
<text x="668.50" y="269.13" textLength="16.00" lengthAdjust="spacingAndGlyphs" font-size="4.1" fill="#a6a6a6" font-weight="normal" font-style="normal" font-family="Liberation Sans">Channels</text>
<path d="M743.6,266.60 h3.6 M743.6,267.70 h3.6 M743.6,268.80 h3.6" stroke="#b4b4b4" stroke-width="0.55"/>
<line x1="689.30" y1="263.60" x2="689.30" y2="272.70" stroke="#3a3a3a" stroke-width="0.4"/>
<rect x="648.50" y="277.30" width="32.40" height="6.80" fill="#434343" />
<circle cx="651.6" cy="280.4" r="1.3" fill="none" stroke="#e0e0e0" stroke-width="0.55"/><path d="M652.5,281.4 l1.2,1.3" stroke="#e0e0e0" stroke-width="0.6"/>
<text x="656.00" y="282.33" textLength="8.20" lengthAdjust="spacingAndGlyphs" font-size="4.1" fill="#d2d2d2" font-weight="normal" font-style="normal" font-family="Liberation Sans">Kind</text>
<path d="M677.45,280.40 L678.60,281.60 L679.75,280.40" fill="none" stroke="#c4c4c4" stroke-width="0.65"/>
<rect x="685.8" y="278.6" width="4.6" height="4.4" fill="none" stroke="#dcdcdc" stroke-width="0.6"/><path d="M686.2,282.6 l1.3,-1.7 l0.9,0.9 l0.6,-0.5 l1,1.3 Z" fill="#dcdcdc"/>
<circle cx="698" cy="280.9" r="2.3" fill="none" stroke="#dcdcdc" stroke-width="0.6"/><path d="M698,278.6 a2.3,2.3 0 0 0 -2,3.4 L698,280.9 Z" fill="#dcdcdc"/>
<path transform="translate(707.20,280.90) skewX(0)" d="M-2.10,-2.20 h4.20 v1.2 h-0.5 v-0.5 h-1.00 v3.00 h0.7 v0.6 h-2.60 v-0.6 h0.7 v-3.00 h-1.00 v0.5 h-0.5 Z" fill="#e4e4e4"/>
<rect x="714.6" y="279" width="3.8" height="3.8" fill="none" stroke="#dcdcdc" stroke-width="0.55"/><rect x="713.9" y="278.3" width="1.4" height="1.4" fill="#dcdcdc"/><rect x="717.7" y="278.3" width="1.4" height="1.4" fill="#dcdcdc"/><rect x="713.9" y="282.1" width="1.4" height="1.4" fill="#dcdcdc"/><rect x="717.7" y="282.1" width="1.4" height="1.4" fill="#dcdcdc"/>
<path d="M724,278.6 h2.8 l1.4,1.4 v3.4 h-4.2 Z" fill="#dcdcdc"/><rect x="724.8" y="281" width="1.7" height="1.7" fill="#535353"/>
<rect x="733.5" y="278.6" width="1.8" height="4.8" rx="0.9" fill="#8a8a8a"/><circle cx="734.4" cy="278.4" r="1.4" fill="#f2f2f2"/>
<rect x="648.60" y="288.30" width="48.50" height="6.60" fill="#434343" />
<text x="650.80" y="293.13" textLength="11.70" lengthAdjust="spacingAndGlyphs" font-size="4.1" fill="#d2d2d2" font-weight="normal" font-style="normal" font-family="Liberation Sans">Normal</text>
<path d="M693.75,291.20 L694.90,292.40 L696.05,291.20" fill="none" stroke="#c4c4c4" stroke-width="0.65"/>
<text x="700.00" y="293.13" textLength="14.50" lengthAdjust="spacingAndGlyphs" font-size="4.1" fill="#bababa" font-weight="normal" font-style="normal" font-family="Liberation Sans">Opacity:</text>
<rect x="717.00" y="288.30" width="14.00" height="6.60" fill="#434343" />
<text x="718.40" y="293.13" textLength="9.90" lengthAdjust="spacingAndGlyphs" font-size="4.1" fill="#d2d2d2" font-weight="normal" font-style="normal" font-family="Liberation Sans">100%</text>
<rect x="731.60" y="288.30" width="4.00" height="6.60" fill="#4b4b4b" />
<path d="M732.45,291.20 L733.60,292.40 L734.75,291.20" fill="none" stroke="#c4c4c4" stroke-width="0.65"/>
<text x="648.20" y="303.84" textLength="9.10" lengthAdjust="spacingAndGlyphs" font-size="4.1" fill="#bababa" font-weight="normal" font-style="normal" font-family="Liberation Sans">Lock:</text>
<rect x="661.2" y="300.2" width="4.2" height="4.2" fill="none" stroke="#dcdcdc" stroke-width="0.55"/><path d="M662.2,301.2 h1.1 v1.1 h1.1 v1.1 h-1.1 v-1.1 h-1.1 Z" fill="#dcdcdc"/>
<path d="M674.3,299.7 l0.6,0.6 l-2.9,3.2 l-0.8,-0.7 Z M670.9,303.1 l0.8,0.7 q-0.5,1.2 -2,1.1 q0.9,-0.6 1.2,-1.8 Z" fill="#e4e4e4"/>
<path d="M680.3,299.8 v5 M677.8,302.3 h5" stroke="#dcdcdc" stroke-width="0.55"/><path d="M680.3,299.3 l0.9,1.1 h-1.8 Z M680.3,305.3 l0.9,-1.1 h-1.8 Z M677.3,302.3 l1.1,0.9 v-1.8 Z M683.3,302.3 l-1.1,0.9 v-1.8 Z" fill="#dcdcdc"/>
<path d="M687.8,300.7 h3.4 v3.4 h-3.4 Z M687,299.90000000000003 v1.6 M686.2,300.7 h1.6 M692,304.90000000000003 v-1.6 M692.8,304.1 h-1.6" fill="none" stroke="#dcdcdc" stroke-width="0.5"/>
<rect x="696" y="301.7" width="4" height="3" rx="0.4" fill="#e4e4e4"/><path d="M696.9,301.7 v-0.8 a1.1,1.1 0 0 1 2.2,0 v0.8" fill="none" stroke="#e4e4e4" stroke-width="0.6"/>
<text x="708.90" y="303.84" textLength="5.60" lengthAdjust="spacingAndGlyphs" font-size="4.1" fill="#bababa" font-weight="normal" font-style="normal" font-family="Liberation Sans">Fill:</text>
<rect x="717.00" y="299.00" width="14.00" height="6.60" fill="#434343" />
<text x="718.40" y="303.84" textLength="9.90" lengthAdjust="spacingAndGlyphs" font-size="4.1" fill="#d2d2d2" font-weight="normal" font-style="normal" font-family="Liberation Sans">100%</text>
<rect x="731.60" y="299.00" width="4.00" height="6.60" fill="#4b4b4b" />
<path d="M732.45,301.90 L733.60,303.10 L734.75,301.90" fill="none" stroke="#c4c4c4" stroke-width="0.65"/>
<rect x="743.20" y="308.60" width="6.80" height="87.40" fill="#4a4a4a" />
<line x1="646.30" y1="308.80" x2="743.20" y2="308.80" stroke="#434343" stroke-width="0.45"/>
<line x1="657.50" y1="308.80" x2="657.50" y2="319.75" stroke="#434343" stroke-width="0.45"/>
<path d="M649.30,314.28 Q652.00,311.38 654.70,314.28 Q652.00,317.18 649.30,314.28 Z" fill="#f0f0f0"/><circle cx="652.00" cy="314.28" r="0.9" fill="#535353"/>
<text x="675.10" y="315.81" textLength="41.60" lengthAdjust="spacingAndGlyphs" font-size="4.1" fill="#dcdcdc" font-weight="normal" font-style="normal" font-family="Liberation Sans">Material Selection Masks</text>
<rect x="659.90" y="310.98" width="11.60" height="6.60" fill="#9a4fb0" />
<path d="M663.9,312.175 h3.6 v1.4 h1.6 v2.6 h-3 v-1.2 h-2.2 Z" fill="#d8dc58"/><rect x="667.1" y="314.175" width="1.6" height="1.8" fill="#e85a9a"/><rect x="662.9" y="315.175" width="2" height="1.4" fill="#60e8e0"/>
<line x1="646.30" y1="319.75" x2="743.20" y2="319.75" stroke="#434343" stroke-width="0.45"/>
<line x1="657.50" y1="319.75" x2="657.50" y2="330.70" stroke="#434343" stroke-width="0.45"/>
<rect x="650.3" y="323.43" width="3.6" height="3.6" fill="none" stroke="#5c5c5c" stroke-width="0.4"/>
<text x="675.10" y="326.76" textLength="39.90" lengthAdjust="spacingAndGlyphs" font-size="4.1" fill="#dcdcdc" font-weight="normal" font-style="normal" font-family="Liberation Sans">Object Selection Masks</text>
<rect x="659.90" y="321.93" width="11.60" height="6.60" fill="#14d8dc" />
<rect x="663.9" y="323.925" width="2.6" height="2.6" fill="#a064d8"/><rect x="666.3" y="323.125" width="1.8" height="1.8" fill="#e06070"/><rect x="666.6999999999999" y="325.52500000000003" width="2" height="2" fill="#5070e0"/><rect x="662.5" y="326.325" width="2" height="1.4" fill="#e8d050"/>
<line x1="646.30" y1="330.70" x2="743.20" y2="330.70" stroke="#434343" stroke-width="0.45"/>
<line x1="657.50" y1="330.70" x2="657.50" y2="341.65" stroke="#434343" stroke-width="0.45"/>
<rect x="650.3" y="334.38" width="3.6" height="3.6" fill="none" stroke="#5c5c5c" stroke-width="0.4"/>
<text x="675.10" y="337.71" textLength="31.60" lengthAdjust="spacingAndGlyphs" font-size="4.1" fill="#dcdcdc" font-weight="normal" font-style="normal" font-family="Liberation Sans">Depth Information</text>
<defs><linearGradient id="dg" x1="0" y1="0" x2="0" y2="1"><stop offset="0" stop-color="#b0b0b0"/><stop offset="1" stop-color="#f4f4f4"/></linearGradient></defs>
<rect x="659.90" y="332.88" width="11.60" height="6.60" fill="url(#dg)" />
<rect x="662.9" y="334.075" width="5.6" height="3.8" fill="#d8d8d8"/><rect x="665.9" y="333.675" width="2.4" height="2.2" fill="#f4f4f4"/>
<line x1="646.30" y1="341.65" x2="743.20" y2="341.65" stroke="#434343" stroke-width="0.45"/>
<line x1="657.50" y1="341.65" x2="657.50" y2="352.60" stroke="#434343" stroke-width="0.45"/>
<path d="M649.30,347.12 Q652.00,344.23 654.70,347.12 Q652.00,350.02 649.30,347.12 Z" fill="#f0f0f0"/><circle cx="652.00" cy="347.12" r="0.9" fill="#535353"/>
<text x="675.10" y="348.66" textLength="12.80" lengthAdjust="spacingAndGlyphs" font-size="4.1" fill="#dcdcdc" font-weight="normal" font-style="normal" font-family="Liberation Sans">Layer 2</text>
<rect x="659.90" y="343.82" width="11.60" height="6.60" fill="#050505" />
<line x1="646.30" y1="352.60" x2="743.20" y2="352.60" stroke="#434343" stroke-width="0.45"/>
<line x1="657.50" y1="352.60" x2="657.50" y2="363.55" stroke="#434343" stroke-width="0.45"/>
<path d="M649.30,358.08 Q652.00,355.18 654.70,358.08 Q652.00,360.98 649.30,358.08 Z" fill="#f0f0f0"/><circle cx="652.00" cy="358.08" r="0.9" fill="#535353"/>
<text x="675.10" y="359.61" textLength="12.50" lengthAdjust="spacingAndGlyphs" font-size="4.1" fill="#dcdcdc" font-weight="normal" font-style="normal" font-family="Liberation Sans">Layer 1</text>
<rect x="659.90" y="354.78" width="11.60" height="6.60" fill="#8c8c8c" />
<rect x="659.90" y="359.18" width="11.60" height="2.20" fill="#7e7e7e" />
<rect x="646.30" y="363.55" width="96.90" height="10.95" fill="#6b6b6b" />
<line x1="646.30" y1="363.55" x2="743.20" y2="363.55" stroke="#434343" stroke-width="0.45"/>
<line x1="657.50" y1="363.55" x2="657.50" y2="374.50" stroke="#434343" stroke-width="0.45"/>
<path d="M649.30,369.03 Q652.00,366.13 654.70,369.03 Q652.00,371.93 649.30,369.03 Z" fill="#f0f0f0"/><circle cx="652.00" cy="369.03" r="0.9" fill="#535353"/>
<text x="693.70" y="370.56" textLength="39.00" lengthAdjust="spacingAndGlyphs" font-size="4.1" fill="#f0f0f0" font-weight="normal" font-style="normal" font-family="Liberation Sans">Rendered (...se) copy</text>
<rect x="658.50" y="364.83" width="14.40" height="8.40" fill="none" stroke="#d8d8d8" stroke-width="0.5" stroke-dasharray="3 8.4 6 0 6 8.4 3 0" />
<rect x="659.90" y="365.73" width="11.60" height="6.60" fill="#c47888" />
<rect x="660.5" y="366.52500000000003" width="2.2" height="4.6" fill="#d29aa6"/><rect x="668.5" y="366.925" width="2.4" height="4.4" fill="#d0949f"/><path d="M663.3,366.52500000000003 h3.4 v1.6 h1.8 v3.2 h-3.6 v-1.2 h-2.2 Z" fill="#dcc6ca"/><path d="M664.3,367.32500000000005 h2.2 l0.6,3 h-1.6 l-0.4,-1.4 h-1.2 Z" fill="#6e4c58"/>
<path d="M675.3,367.43 v1.2 M675.3,369.43 v1.2" stroke="#cfcfcf" stroke-width="0.9"/>
<rect x="678.00" y="365.73" width="12.20" height="6.60" fill="#050505" />
<path d="M681.6,367.93 h2.2 v-1.2 h3.2 v2.4 h-1 v2.6 h-4.6 Z" fill="#fff"/>
<line x1="646.30" y1="374.50" x2="743.20" y2="374.50" stroke="#434343" stroke-width="0.45"/>
<line x1="657.50" y1="374.50" x2="657.50" y2="385.45" stroke="#434343" stroke-width="0.45"/>
<path d="M649.30,379.98 Q652.00,377.08 654.70,379.98 Q652.00,382.88 649.30,379.98 Z" fill="#f0f0f0"/><circle cx="652.00" cy="379.98" r="0.9" fill="#535353"/>
<text x="675.10" y="381.51" textLength="59.30" lengthAdjust="spacingAndGlyphs" font-size="4.1" fill="#dcdcdc" font-weight="normal" font-style="normal" font-family="Liberation Sans">Rendered Image (Reduced Noise)</text>
<rect x="659.90" y="376.68" width="11.60" height="6.60" fill="#c47888" />
<rect x="660.5" y="377.475" width="2.2" height="4.6" fill="#d29aa6"/><rect x="668.5" y="377.875" width="2.4" height="4.4" fill="#d0949f"/><path d="M663.3,377.475 h3.4 v1.6 h1.8 v3.2 h-3.6 v-1.2 h-2.2 Z" fill="#dcc6ca"/><path d="M664.3,378.27500000000003 h2.2 l0.6,3 h-1.6 l-0.4,-1.4 h-1.2 Z" fill="#6e4c58"/>
<line x1="646.30" y1="385.45" x2="743.20" y2="385.45" stroke="#434343" stroke-width="0.45"/>
<line x1="657.50" y1="385.45" x2="657.50" y2="396.40" stroke="#434343" stroke-width="0.45"/>
<path d="M649.30,390.93 Q652.00,388.03 654.70,390.93 Q652.00,393.82 649.30,390.93 Z" fill="#f0f0f0"/><circle cx="652.00" cy="390.93" r="0.9" fill="#535353"/>
<text x="675.10" y="392.46" textLength="31.00" lengthAdjust="spacingAndGlyphs" font-size="4.1" fill="#dcdcdc" font-weight="normal" font-style="normal" font-family="Liberation Sans">Background Color</text>
<rect x="663.00" y="388.07" width="5.60" height="5.70" fill="#ffffff" />
<line x1="646.30" y1="396.40" x2="743.20" y2="396.40" stroke="#434343" stroke-width="0.45"/>
<rect x="646.30" y="396.00" width="103.70" height="9.60" fill="#535353" />
<line x1="646.30" y1="396.00" x2="750.00" y2="396.00" stroke="#474747" stroke-width="0.4"/>
<path d="M670.9,401 h3.8" stroke="#7c7c7c" stroke-width="0.5"/><rect x="669.6" y="400" width="2.8" height="2" rx="1" fill="none" stroke="#7c7c7c" stroke-width="0.45"/><rect x="673.2" y="400" width="2.8" height="2" rx="1" fill="none" stroke="#7c7c7c" stroke-width="0.45"/>
<text x="681.6" y="402.6" font-size="5.2" font-style="italic" fill="#e2e2e2" font-family="Liberation Serif">fx</text><path d="M686.6,403.6 l0.8,0 l0,-0.8 Z" fill="#dcdcdc"/>
<rect x="692" y="398.8" width="5.2" height="4.4" fill="#e2e2e2"/><circle cx="694.6" cy="401" r="1.2" fill="#535353"/>
<circle cx="704.8" cy="401" r="2.2" fill="none" stroke="#e2e2e2" stroke-width="0.6"/><path d="M703.2,402.6 A2.2,2.2 0 0 0 706.4,399.4 Z" fill="#e2e2e2"/><path d="M707.6,403.6 l0.8,0 l0,-0.8 Z" fill="#dcdcdc"/>
<path d="M712.9,398.8 h2 l0.7,0.8 h2.4 v3.6 h-5.1 Z" fill="#e2e2e2"/>
<path d="M724,399 h4.4 v2.6 l-1.6,1.6 h-2.8 Z" fill="none" stroke="#e2e2e2" stroke-width="0.6"/>
<path d="M734.6,399.5 h3.8 M735.8,399.4 v-0.7 h1.4 v0.7" fill="none" stroke="#e2e2e2" stroke-width="0.55"/><path d="M735,400.2 h3 l-0.3,3.3 h-2.4 Z" fill="none" stroke="#e2e2e2" stroke-width="0.55"/>
</svg>
</body>
</html>
